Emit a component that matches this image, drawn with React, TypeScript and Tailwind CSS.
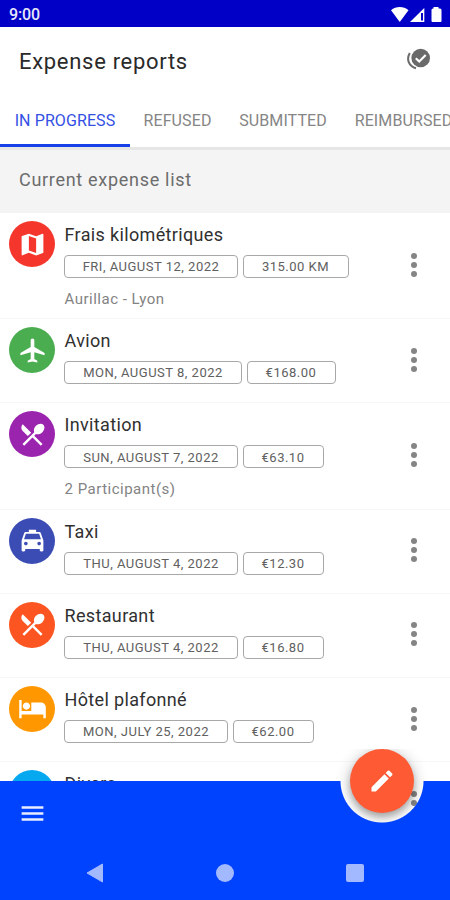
import React from 'react';
import type { IconType } from 'react-icons';
import {
  MdEdit,
  MdHotel,
  MdLocalAirport,
  MdLocalTaxi,
  MdMap,
  MdMenu,
  MdRestaurantMenu,
} from 'react-icons/md';
import { clsx } from 'clsx';

interface Expense {
  title: string;
  date: string;
  dateWidth: string;
  amount: string;
  amountWidth: string;
  note?: string;
  icon: IconType;
  color: string;
}

const tabs = [
  { label: 'IN PROGRESS', width: 'w-[130px]' },
  { label: 'REFUSED', width: 'w-[95px]' },
  { label: 'SUBMITTED', width: 'w-[116px]' },
  { label: 'REIMBURSED', width: 'w-[125px]' },
];

const expenses: Expense[] = [
  { title: 'Frais kilométriques', date: 'FRI, AUGUST 12, 2022', dateWidth: 'w-[174px]', amount: '315.00 KM', amountWidth: 'w-[106px]', note: 'Aurillac - Lyon', icon: MdMap, color: 'bg-[#f4362c]' },
  { title: 'Avion', date: 'MON, AUGUST 8, 2022', dateWidth: 'w-[178px]', amount: '€168.00', amountWidth: 'w-[89px]', icon: MdLocalAirport, color: 'bg-[#4aae50]' },
  { title: 'Invitation', date: 'SUN, AUGUST 7, 2022', dateWidth: 'w-[174px]', amount: '€63.10', amountWidth: 'w-[81px]', note: '2 Participant(s)', icon: MdRestaurantMenu, color: 'bg-[#9b24af]' },
  { title: 'Taxi', date: 'THU, AUGUST 4, 2022', dateWidth: 'w-[174px]', amount: '€12.30', amountWidth: 'w-[81px]', icon: MdLocalTaxi, color: 'bg-[#3b4db5]' },
  { title: 'Restaurant', date: 'THU, AUGUST 4, 2022', dateWidth: 'w-[174px]', amount: '€16.80', amountWidth: 'w-[81px]', icon: MdRestaurantMenu, color: 'bg-[#fc5521]' },
  { title: 'Hôtel plafonné', date: 'MON, JULY 25, 2022', dateWidth: 'w-[164px]', amount: '€62.00', amountWidth: 'w-[81px]', icon: MdHotel, color: 'bg-[#ff9800]' },
  { title: 'Divers', date: 'FRI, JULY 22, 2022', dateWidth: 'w-[164px]', amount: '€20.00', amountWidth: 'w-[81px]', icon: MdMap, color: 'bg-[#06a9f0]' },
];

function StatusBar() {
  return (
    <div className="flex h-[27px] shrink-0 items-center justify-between bg-[#0000c6] pt-[3px] pr-[7px] pl-[9px]">
      <span className="text-[16px] font-medium tracking-[-0.1px] text-[#e6e6fb]">9:00</span>
      <svg width="53" height="18" viewBox="0 0 53 18" fill="#fff">
        <path d="M1 4.2C6-.1 13.500-.1 18.500 4.200L9.750 16z" />
        <path d="M20 16 34.300 2v14z" />
        <path d="M31 7v7.500h2V7z" fill="#0000c6" />
        <path d="M43.500 1h5v1.500h1.500a1.500 1.500 0 0 1 1.500 1.500V15a1 1 0 0 1-1 1h-8a1 1 0 0 1-1-1V4a1.500 1.500 0 0 1 1.500-1.500h.5z" />
      </svg>
    </div>
  );
}

function Chip({ text, width }: { text: string; width: string }) {
  return (
    <span
      className={clsx(
        'flex h-[23px] shrink-0 items-center justify-center rounded-[4px] border border-[#a8a8a8] pt-px text-[13px] tracking-[0.5px] whitespace-nowrap text-[#606060]',
        width
      )}
    >
      {text}
    </span>
  );
}

function ExpenseRow({ expense }: { expense: Expense }) {
  const Icon = expense.icon;
  return (
    <div
      className={clsx(
        'flex shrink-0 border-b border-[#f7f7f7] pl-[9px]',
        expense.note ? 'h-[106.200px]' : 'h-[84.200px]'
      )}
    >
      <div className={clsx('mt-[8px] flex size-[46px] shrink-0 items-center justify-center rounded-full text-white', expense.color)}>
        <Icon size={29} />
      </div>
      <div className="flex flex-1 flex-col pt-[11px] pl-[9px]">
        <h3 className="pl-[0.500px] text-[18px] leading-[22px] tracking-[0.35px] text-[#303030]">{expense.title}</h3>
        <div className="mt-[9px] flex gap-[4.500px]">
          <Chip text={expense.date} width={expense.dateWidth} />
          <Chip text={expense.amount} width={expense.amountWidth} />
        </div>
        {expense.note && (
          <p className="mt-[11px] pl-[0.500px] text-[15px] leading-[20px] tracking-[0.5px] text-[#838383]">{expense.note}</p>
        )}
      </div>
      <div className="mr-[33px] flex flex-col items-center justify-center gap-[3px] self-stretch pb-[2px]">
        <i className="size-[6px] rounded-full bg-[#858585]" />
        <i className="size-[6px] rounded-full bg-[#858585]" />
        <i className="size-[6px] rounded-full bg-[#858585]" />
      </div>
    </div>
  );
}

export default function App() {
  return (
    <div className="relative flex h-[900px] w-[450px] flex-col overflow-hidden bg-white font-['Roboto',sans-serif]">
      <StatusBar />

      {/* Header */}
      <header className="flex h-[67px] shrink-0 items-center justify-between px-[19px]">
        <h1 className="pt-[2px] text-[22px] tracking-[0.7px] text-[#2a2a2a]">Expense reports</h1>
        <svg width="25" height="24" viewBox="0 0 25 24" className="mb-[2px]">
          <circle cx="14.700" cy="10" r="9.300" fill="#6a6a6a" />
          <path d="m9.800 10.200 3.400 3.300 6.500-6.500" fill="none" stroke="#fff" strokeWidth="2.200" />
          <path d="M3.800 5C0 11.500 3 18.500 10 20.300" fill="none" stroke="#6a6a6a" strokeWidth="2" />
        </svg>
      </header>

      {/* Tabs */}
      <nav className="z-10 flex h-[53px] shrink-0 overflow-hidden">
        {tabs.map((tab, i) => (
          <button
            key={tab.label}
            className={clsx(
              'flex shrink-0 items-center justify-center border-b-[3px] pt-[3px] text-[16px] tracking-[0.1px] whitespace-nowrap',
              tab.width,
              i === 0 ? 'border-[#1741e8] text-[#3450e4]' : 'border-transparent text-[#858585]'
            )}
          >
            {tab.label}
          </button>
        ))}
      </nav>

      <div className="flex h-[66px] shrink-0 items-center border-t-[3px] border-[#e6e6e6] bg-[#f4f4f4] pb-[5px] pl-[19px]">
        <h2 className="text-[18px] tracking-[0.7px] text-[#6c6c6c]">Current expense list</h2>
      </div>

      <main className="flex min-h-0 flex-1 flex-col">
        {expenses.map((expense) => (
          <ExpenseRow key={expense.title} expense={expense} />
        ))}
      </main>

      {/* Floating action button, sits in the notch of the bottom bar */}
      <button className="absolute top-[749px] left-[350px] flex size-[64px] items-center justify-center rounded-full bg-[#fe5a34] text-white shadow-[0_4px_7px_rgba(0,0,0,0.3),0_2px_12px_6px_rgba(0,0,0,0.09)] [clip-path:inset(0_-20px_-20px_-20px)]">
        <MdEdit size={28} />
      </button>

      {/* Bottom bar */}
      <footer className="absolute inset-x-0 bottom-0 flex h-[119px] flex-col bg-[radial-gradient(circle_at_382px_0px,transparent_41px,#0043ff_42px)]">
        <div className="flex h-[65px] items-center pl-[18px] text-[#e8edff]">
          <MdMenu size={29} />
        </div>
        <div className="flex h-[54px] items-start justify-between pt-[17px] pr-[86px] pl-[86px]">
          <svg width="18" height="20" viewBox="0 0 18 20" fill="#a3b9ff">
            <path d="M16.500 1v18L1 10z" stroke="#a3b9ff" strokeLinejoin="round" />
          </svg>
          <span className="mt-px size-[18px] rounded-full bg-[#a3b9ff]" />
          <span className="mt-px size-[18px] rounded-[2px] bg-[#a3b9ff]" />
        </div>
      </footer>
    </div>
  );
}
